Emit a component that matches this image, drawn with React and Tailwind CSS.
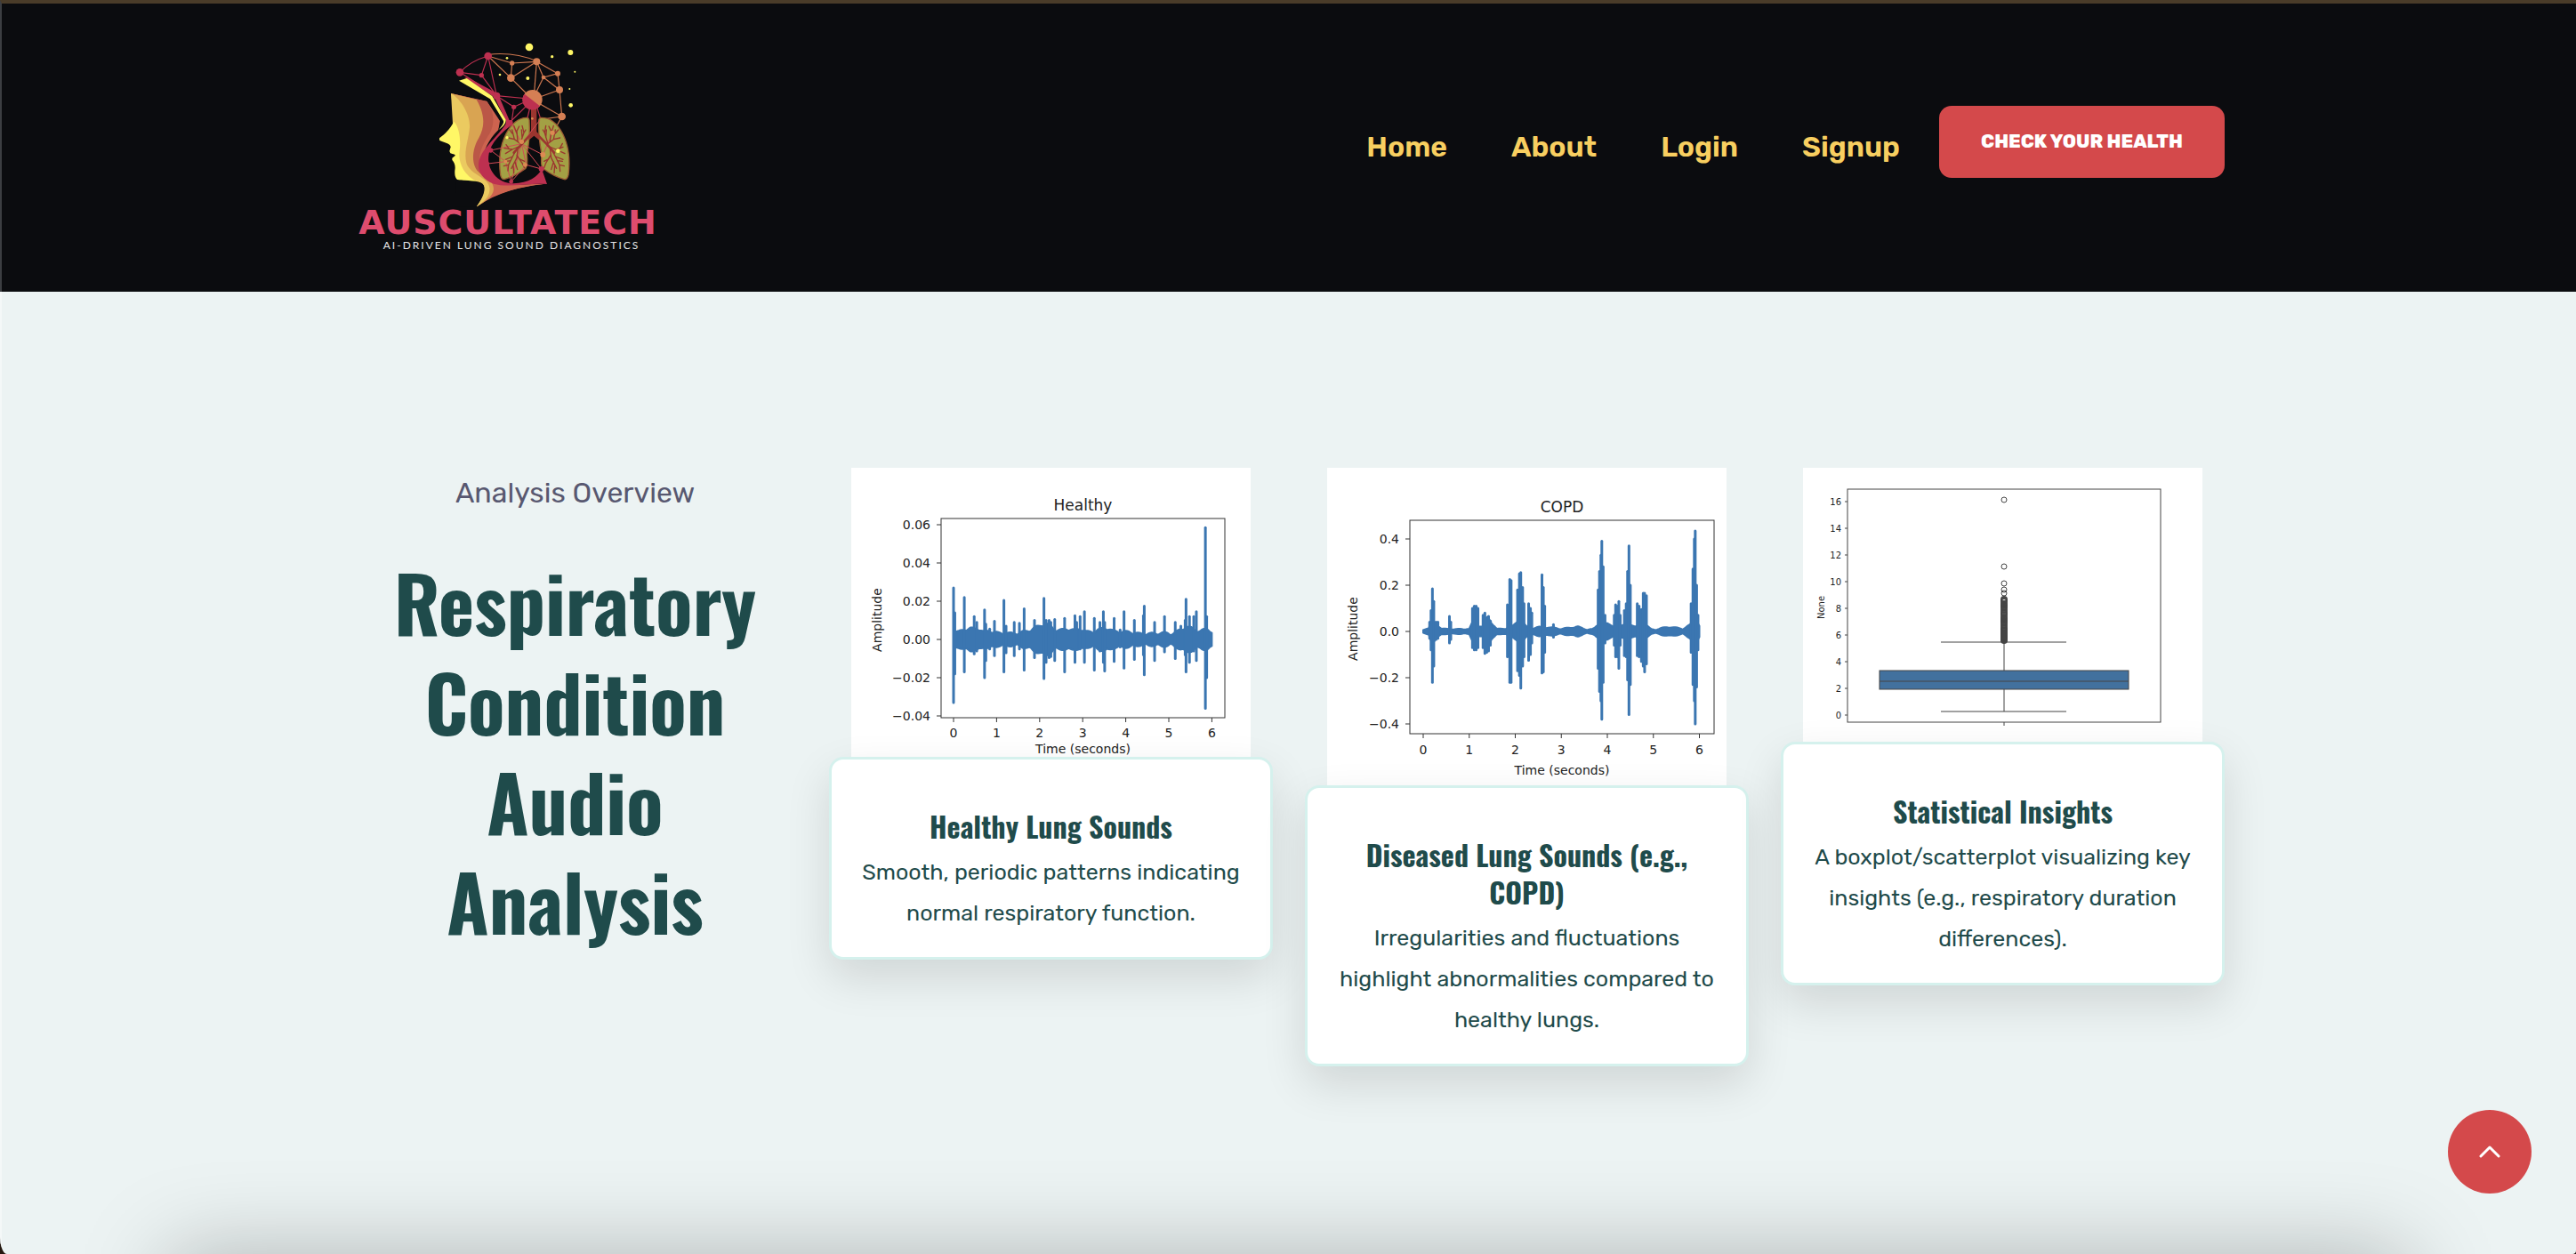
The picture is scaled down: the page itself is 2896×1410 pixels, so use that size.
import React from "react";

const SANS = "font-['Rubik','Inter',sans-serif]";
const HEADING = "font-['Oswald','Roboto_Condensed','Liberation_Sans',sans-serif]";

/* ---------- Logo ---------- */

const CRIMSON_LINKS = [
  [108, 124, 181, 134], [203, 69, 181, 134], [203, 69, 232, 203], [181, 134, 232, 203], [108, 124, 232, 203],
  [232, 203, 340, 213], [232, 203, 290, 241], [290, 241, 340, 218], [290, 241, 282, 294], [340, 230, 275, 294],
  [366, 235, 380, 280], [345, 240, 334, 285],
];
const ORANGE_LINKS = [
  [203, 69, 284, 93], [284, 93, 367, 88], [203, 69, 280, 143], [284, 93, 280, 143], [280, 143, 367, 88],
  [280, 143, 353, 216], [367, 88, 357, 216], [367, 88, 390, 141], [367, 88, 438, 128], [390, 141, 438, 128],
  [390, 141, 444, 183], [438, 128, 444, 183], [444, 183, 452, 273], [444, 183, 353, 216], [353, 216, 452, 273],
  [390, 141, 353, 216], [452, 273, 378, 283], [452, 273, 424, 325],
];
const ORANGE_NODES = [[284, 93, 8], [367, 88, 12], [280, 143, 13], [390, 141, 7], [438, 128, 9], [444, 183, 12], [452, 273, 13]];
const CRIMSON_NODES = [[108, 124, 13], [203, 69, 13], [181, 134, 8], [232, 203, 12], [290, 241, 8], [278, 294, 9], [212, 387, 8], [202, 432, 6], [281, 493, 7], [383, 450, 9]];
const SPARKS = [[342, 39, 13], [481, 57, 9], [419, 71, 5], [267, 76, 4], [243, 132, 4], [337, 144, 6], [496, 122, 3], [478, 180, 3], [482, 235, 7]];
const LOWER_LINKS = [
  [212, 387, 316, 365], [212, 387, 262, 425], [202, 432, 262, 425], [262, 425, 281, 493], [281, 493, 332, 436],
  [281, 493, 316, 365], [316, 365, 388, 402], [316, 365, 378, 285], [332, 436, 383, 450], [316, 365, 383, 450],
  [282, 294, 316, 365], [388, 402, 420, 328], [316, 365, 332, 436],
];
const BRONCHI = [
  "M316 367 L292 350 L284 318 M292 350 L272 345 M284 330 L276 318 M303 358 L300 322 L308 306 M301 332 L290 304 M312 362 L324 328 L330 318 M318 344 L316 318 M324 328 L318 304",
  "M312 372 L285 384 L258 380 M285 384 L262 398 M274 382 L264 368 M302 378 L286 408 L262 418 M286 408 L272 436 L256 440 M279 422 L266 424 M304 380 L300 412 L282 448 M294 426 L302 452 M300 404 L318 430 L326 446 M308 416 L326 424 M272 436 L270 456 M288 438 L290 464",
  "M402 367 L424 350 L430 318 M424 350 L446 345 M430 330 L440 318 M412 358 L416 322 L408 306 M415 332 L424 304 M404 362 L394 328 L388 318 M398 344 L400 318 M394 328 L398 304",
  "M404 372 L432 384 L456 376 M432 384 L462 398 M444 382 L454 364 M414 378 L430 408 L456 418 M430 408 L444 436 L460 440 M437 422 L454 424 M412 380 L416 412 L434 448 M424 426 L416 452 M414 404 L398 430 L392 446 M408 416 L392 424 M444 436 L446 458 M428 438 L426 464",
];

function LogoMark() {
  return (
    <svg viewBox="0 0 540 600" className="block h-[200px] w-[180px]" aria-hidden="true">
      <path fill="#cd634f" d="M78 195 L200 222 L247 288 L238 318 C204 350 180 400 184 440 C196 480 216 502 250 507 L395 500 C320 506 230 530 165 577 C180 540 190 515 172 490 Z" />
      <path fill="#bb5747" d="M78 195 L200 222 C224 255 226 295 210 328 C190 360 168 395 174 440 C182 480 202 500 218 520 C210 550 180 560 165 577 L150 440 Z" />
      <path fill="#cd634f" d="M180 470 C200 485 222 500 222 518 C220 545 190 560 165 577 C230 525 320 510 395 500 L300 503 C250 503 215 492 180 470 Z" />
      <path fill="#d9a452" d="M78 195 L164 216 C192 265 194 305 172 345 C154 375 146 415 160 445 C172 475 222 480 222 518 C220 545 190 560 165 577 L110 440 Z" />
      <path fill="#ebca60" d="M78 195 C112 215 144 268 141 310 C138 350 120 390 130 430 C142 470 208 480 208 515 C206 545 184 560 165 577 L90 400 Z" />
      <path fill="#fff766" d="M88 290 C106 310 112 350 107 390 C102 425 118 470 168 493 L192 499 C186 492 120 489 106 488 C92 486 90 470 91 455 C94 440 90 428 82 420 L82 413 L95 403 L76 397 L73 390 L77 376 C76 362 50 360 39 353 L39 346 C58 332 76 315 88 290 Z" />
      <path fill="#0b0c0f" d="M96 487 C130 490 172 489 187 500 C197 512 188 548 164 577 L90 577 Z" />
      <path fill="#ebca60" d="M160 489 C190 494 197 512 190 536 L165 577 C196 555 210 538 208 515 C204 500 186 490 160 489 Z" />

      <path fill="#bd3050" d="M124 142 L134 142 L236 196 L276 288 L284 300 C250 326 212 362 206 398 C196 450 234 498 288 499 C340 497 372 476 384 450 L402 501 C340 496 270 514 222 500 C188 488 168 462 171 432 C176 385 232 345 262 300 L264 288 L224 208 Z" />
      <path fill="#0b0c0f" d="M255 290 L222 225 L204 214 L200 222 L243 288 L238 318 Z" />
      <path fill="#fff766" d="M105 152 L131 144 L217 204 L263 284 C263 298 252 308 239 318 C250 304 257 296 255 288 L210 214 Z" />

      <g stroke="#bd3050" strokeWidth="3.5" fill="none">
        {CRIMSON_LINKS.map(([a, b, c, d], i) => <line key={i} x1={a} y1={b} x2={c} y2={d} />)}
        <path d="M108 124 Q145 85 203 69" />
      </g>
      <g stroke="#cf7850" strokeWidth="3.5" fill="none">
        {ORANGE_LINKS.map(([a, b, c, d], i) => <line key={i} x1={a} y1={b} x2={c} y2={d} />)}
        <path d="M203 64 Q290 54 367 86" />
      </g>

      <path fill="#9c352f" d="M348 245 H367 V325 L402 362 L396 370 L358 338 L318 372 L312 364 L348 326 Z" />
      <g fill="#a3a044" stroke="#9b5a33" strokeWidth="4">
        <path d="M335 277 C280 275 230 360 245 470 Q248 487 260 484 Q290 476 330 448 Q338 438 334 400 Q346 340 342 285 Q341 278 335 277 Z" />
        <path d="M381 277 C440 275 488 360 474 470 Q470 487 460 485 Q425 476 388 448 Q380 440 384 400 Q372 340 374 285 Q375 278 381 277 Z" />
      </g>
      <g stroke="#d44a55" strokeWidth="3">
        {LOWER_LINKS.map(([a, b, c, d], i) => <line key={i} x1={a} y1={b} x2={c} y2={d} />)}
      </g>
      <g stroke="#9c352f" strokeWidth="4" fill="none" strokeLinecap="round" strokeLinejoin="round">
        {BRONCHI.map((d) => <path key={d} d={d} />)}
        <path strokeWidth="8" d="M352 328 L316 367 L290 395 M364 328 L402 367 L426 395" />
      </g>
      <g fill="#dc8a52">
        <circle cx="316" cy="358" r="8" />
        <circle cx="262" cy="425" r="6" />
        <circle cx="328" cy="436" r="7" />
        <circle cx="388" cy="402" r="9" />
        <circle cx="420" cy="328" r="8" />
        <circle cx="352" cy="280" r="4" />
      </g>
      <circle cx="353" cy="216" r="33" fill="#d57f54" />
      <path fill="#bd3050" d="M326 197 A33 33 0 0 0 378 238 Z" />
      <g fill="#d57f54">{ORANGE_NODES.map(([x, y, r]) => <circle key={x} cx={x} cy={y} r={r} />)}</g>
      <g fill="#bd3050">{CRIMSON_NODES.map(([x, y, r]) => <circle key={x} cx={x} cy={y} r={r} />)}</g>
      <g fill="#fff766">
        {SPARKS.map(([x, y, r]) => <circle key={x} cx={x} cy={y} r={r} />)}
        <circle cx="267" cy="344" r="5" />
        <circle cx="439" cy="389" r="7" />
      </g>
    </svg>
  );
}

/* ---------- Charts ---------- */

// [time, half height of the solid band]; amplitudes are in units of 0.01
const HEALTHY_BASE = [
  [0, .4], [.1, .3], [.3, .45], [.4, .5], [.5, .45], [.6, .45], [.7, .3], [.85, .35], [.95, .3], [1.1, .2], [1.25, .25], [1.4, .2],
  [1.6, .3], [1.75, .35], [1.9, .55], [2, .6], [2.1, .7], [2.2, .7], [2.35, .4], [2.5, .4], [2.65, .45], [2.8, .4], [2.95, .45],
  [3.1, .3], [3.25, .3], [3.4, .45], [3.55, .5], [3.7, .35], [3.9, .3], [4.1, .3], [4.3, .2], [4.5, .2], [4.7, .22],
  [4.9, .25], [5.1, .2], [5.25, .4], [5.4, .55], [5.55, .5], [5.7, .3], [5.9, .5], [6, .25],
];
// [time, positive peak, negative peak]
const HEALTHY_PEAKS = [
  [0, 2.7, 3.3], [.03, 1.4, 1.8], [.25, 2.2, 1.7], [.48, 1.2, .75], [.54, .9, .6], [.72, 1.55, 2], [.75, .8, 1.1], [.84, .55, .5], [.95, .95, .85],
  [1.17, 2.05, 1.7], [1.22, .7, .7], [1.41, .9, .85], [1.53, .85, .5], [1.64, 1.6, 1.6], [1.88, 1, .95], [2.1, 2.15, 2.05], [2.15, 1, 1.2], [2.22, 1, .95],
  [2.26, .9, .9], [2.35, 1.05, 1.1], [2.58, 1.1, 1.7], [2.82, 1.25, 1.2], [2.86, .9, .5], [2.94, 1.2, .5], [3.04, 1.45, 1.2], [3.27, 1.1, 1.6], [3.4, .9, .6],
  [3.48, 1.45, 1.2], [3.51, .9, 1.65], [3.73, 1.1, 1.15], [3.87, .5, .4], [3.96, 1.45, 1.5], [4.2, 1, 1.05], [4.41, 1.25, .8], [4.43, 1.75, 1.85], [4.67, .9, 1.1],
  [4.9, 1.2, .65], [5.15, .9, 1], [5.28, .7, .5], [5.38, 1, .8], [5.4, 2.1, 1.7], [5.48, 1.2, 1.2], [5.58, 1.2, .6], [5.64, 1.45, 1.1], [5.85, 5.85, 3.6], [5.88, 1.2, 2],
];

// amplitudes are in units of 0.1
const COPD_BASE = [
  [0, .06], [.12, .08], [.2, .5], [.3, .25], [.4, .06], [.55, .08], [.7, .04], [.85, .08], [1, .06], [1.1, .5], [1.2, .2], [1.3, .15],
  [1.4, .6], [1.5, .3], [1.6, .06], [1.8, .1], [1.95, .2], [2.1, .5], [2.25, .15], [2.4, .1], [2.5, .15], [2.65, .15], [2.8, .12],
  [3, .08], [3.2, .12], [3.35, .18], [3.5, .06], [3.7, .06], [3.85, .35], [4, .3], [4.1, .2], [4.3, .2], [4.45, .3], [4.6, .15],
  [4.8, .3], [4.95, .06], [5.1, .06], [5.3, .16], [5.5, .12], [5.65, .08], [5.8, .25], [5.9, .6], [6, .2],
];
const COPD_PEAKS = [
  [.14, .4, .3], [.17, .9, .8], [.2, 1.85, 2.2], [.23, 1.3, 1.5], [.28, .4, .35], [.32, .4, .3], [.57, .65, .5], [.6, .4, .35],
  [1.07, 1, .7], [1.11, 1.1, .8], [1.15, 1.1, .8], [1.19, 1, .7], [1.3, .7, .7], [1.34, .8, .95], [1.38, .6, .9], [1.42, .65, .85], [1.46, .45, .6],
  [1.83, 1.15, 1.1], [1.88, 2.25, 2.2], [1.91, 2.2, 2.2], [2.05, 1.8, 1.7], [2.09, 2.5, 1.9], [2.12, 2.55, 2.45], [2.16, 1.9, 1.5], [2.19, 1.2, 1.1],
  [2.29, 1.2, 1.25], [2.33, 1, 1], [2.36, .8, .5], [2.58, 2.45, 1.8], [2.61, 1.9, 1.75], [2.64, 1.1, .9], [2.83, .3, .25],
  [3.8, 1.8, 1.6], [3.83, 2.6, 2.6], [3.86, 3.3, 3], [3.88, 3.9, 3.8], [3.91, 2.8, 2.2], [3.95, .7, .5], [4.15, .7, .6], [4.18, 1.15, 1.1], [4.22, 1.1, 1.1], [4.25, 1.3, 1.6], [4.28, .7, .6],
  [4.37, .9, 1.05], [4.41, 1.2, 1.1], [4.44, 2.6, 2.1], [4.47, 3.7, 3.6], [4.5, 2, 2.3], [4.65, 1.2, 1.05], [4.69, 1.1, 1.1], [4.74, .95, 1.3], [4.78, 1.65, 1.5], [4.81, 1.65, 1.75], [4.85, 1.55, 1.4],
  [5.82, 1.2, .9], [5.86, 2.7, 2.3], [5.89, 4, 3], [5.91, 4.35, 4], [5.94, 2, 2.4], [5.97, .7, .8],
];

// Linear interpolation over the band, with a small deterministic jitter for a noisy outline
function bandOutline(base, jitter) {
  const points = [];
  for (let i = 0; i <= 150; i += 1) {
    const t = i * 0.04;
    const k = Math.max(1, base.findIndex(([bt]) => bt >= t));
    const [t0, a0] = base[k - 1];
    const [t1, a1] = base[k];
    const a = a0 + ((a1 - a0) * (t - t0)) / (t1 - t0);
    points.push([t, a + jitter * Math.abs(Math.sin(i * 12.9898))]);
  }
  return points;
}

function Waveform({ title, height, frame, originX, unitX, originY, unitY, base, peaks, jitter, yTicks, titleY, xLabelY, timeY, amplitudeY }) {
  const [left, top, right, bottom] = frame;
  const middle = (left + right) / 2;
  const x = (t) => originX + t * unitX;
  const y = (v) => originY - v * unitY;
  const band = bandOutline(base, jitter);
  const body = [
    ...band.map(([t, a]) => `${x(t)},${y(a)}`),
    ...[...band].reverse().map(([t, a]) => `${x(t)},${y(-a)}`),
  ].join(" ");
  return (
    <svg viewBox={`0 0 449 ${height}`} className="block h-auto w-full bg-white font-['DejaVu_Sans',sans-serif]" role="img" aria-label={`${title} waveform`}>
      <g fill="#222">
        <text x={middle} y={titleY} fontSize="17" textAnchor="middle">{title}</text>
        <text x={middle} y={timeY} fontSize="14" textAnchor="middle">Time (seconds)</text>
        <text transform={`translate(34 ${amplitudeY}) rotate(-90)`} fontSize="14" textAnchor="middle">Amplitude</text>
        {yTicks.map(([v, label]) => (
          <text key={label} x={left - 12} y={y(v) + 5} fontSize="14" textAnchor="end">{label}</text>
        ))}
        {[0, 1, 2, 3, 4, 5, 6].map((t) => (
          <text key={t} x={x(t)} y={xLabelY} fontSize="14" textAnchor="middle">{t}</text>
        ))}
      </g>
      <g stroke="#3b76b1" fill="#3b76b1">
        <polygon points={body} strokeWidth="2" strokeLinejoin="round" />
        {peaks.map(([t, up, down]) => (
          <line key={t} x1={x(t)} x2={x(t)} y1={y(up)} y2={y(-down)} strokeWidth="3" strokeLinecap="round" />
        ))}
      </g>
      <g stroke="#333" fill="none" strokeWidth="1">
        <rect x={left} y={top} width={right - left} height={bottom - top} />
        {yTicks.map(([v, label]) => <line key={label} x1={left - 5} x2={left} y1={y(v)} y2={y(v)} />)}
        {[0, 1, 2, 3, 4, 5, 6].map((t) => <line key={t} x1={x(t)} x2={x(t)} y1={bottom} y2={bottom + 5} />)}
      </g>
    </svg>
  );
}

const OUTLIERS = [36, 111, 130, 137, 141, 148, 150, 153, 155, 157, 160, 163, 165, 168, 170, 172, 174, 177, 180, 182, 183, 185, 186, 188, 189, 190, 191, 192, 193, 194];

function BoxPlot() {
  return (
    <svg viewBox="0 0 449 308" className="block h-auto w-full bg-white font-['DejaVu_Sans',sans-serif]" role="img" aria-label="Boxplot of respiratory duration">
      <g fill="#222" fontSize="10">
        {[0, 2, 4, 6, 8, 10, 12, 14, 16].map((v) => (
          <text key={v} x="43" y={282 - v * 15} textAnchor="end">{v}</text>
        ))}
        <text transform="translate(24 157) rotate(-90)" textAnchor="middle">None</text>
      </g>
      <g stroke="#444" fill="none">
        {[0, 2, 4, 6, 8, 10, 12, 14, 16].map((v) => (
          <line key={v} x1="47" x2="50" y1={278 - v * 15} y2={278 - v * 15} />
        ))}
        <rect x="50" y="24" width="352" height="262" />
        <path d="M226 286 V290 M226 196 V228 M226 249 V274 M155 196 H296 M155 274 H296" />
        <rect x="86" y="228" width="280" height="21" fill="#42719e" />
        <path d="M86 240 H366" />
        {OUTLIERS.map((cy) => <circle key={cy} cx="226" cy={cy} r="3" strokeWidth={cy > 145 ? 2 : 1} />)}
      </g>
    </svg>
  );
}

/* ---------- Page ---------- */

const CARDS = [
  {
    title: "Healthy Lung Sounds",
    text: "Smooth, periodic patterns indicating normal respiratory function.",
    chart: (
      <Waveform title="Healthy" height={325} frame={[101, 57, 420, 281]} originX={115} unitX={48.4} originY={193} unitY={21.5}
        base={HEALTHY_BASE} peaks={HEALTHY_PEAKS} jitter={0.15} titleY={48} xLabelY={303} timeY={321} amplitudeY={171}
        yTicks={[[6, "0.06"], [4, "0.04"], [2, "0.02"], [0, "0.00"], [-2, "−0.02"], [-4, "−0.04"]]} />
    ),
  },
  {
    title: "Diseased Lung Sounds (e.g., COPD)",
    text: "Irregularities and fluctuations highlight abnormalities compared to healthy lungs.",
    chart: (
      <Waveform title="COPD" height={357} frame={[93, 59, 435, 299]} originX={108} unitX={51.75} originY={184} unitY={26}
        base={COPD_BASE} peaks={COPD_PEAKS} jitter={0.06} titleY={50} xLabelY={322} timeY={345} amplitudeY={181}
        yTicks={[[4, "0.4"], [2, "0.2"], [0, "0.0"], [-2, "−0.2"], [-4, "−0.4"]]} />
    ),
  },
  {
    title: "Statistical Insights",
    text: "A boxplot/scatterplot visualizing key insights (e.g., respiratory duration differences).",
    chart: <BoxPlot />,
  },
];

const NAV = ["Home", "About", "Login", "Signup"];

export default function App() {
  return (
    <div className="bg-[#24170f]">
      <div className={`flex min-h-screen flex-col overflow-hidden rounded-br-[4px] rounded-bl-[8px_20px] bg-[#ecf3f3] text-[#1f4b4b] ${SANS}`}>
        <header className="border-t-4 border-l-2 border-t-[#4a3c29] border-l-[#3c3e42] bg-[#0b0c0f]">
          <div className="mx-auto flex h-[324px] max-w-[2140px] items-start justify-between px-[18px]">
            <a href="#home" className="ml-1 mt-9 flex w-[340px] flex-col items-center">
              <LogoMark />
              <span className="-mt-2 font-['DejaVu_Sans',sans-serif] text-[38px] leading-[36px] font-bold tracking-wide whitespace-nowrap text-[#de4c6e]">AUSCULTATECH</span>
              <span className="pl-2 font-['Lato',sans-serif] text-[12px] leading-4 tracking-[2px] whitespace-nowrap text-[#e4e4e6]">AI-DRIVEN LUNG SOUND DIAGNOSTICS</span>
            </a>
            <nav className="mt-[115px] flex items-start">
              <ul className="mt-6 mr-11 flex gap-[72px] text-[32px] leading-[44px] font-semibold text-[#f8cf60]">
                {NAV.map((item) => (
                  <li key={item}><a href={`#${item.toLowerCase()}`}>{item}</a></li>
                ))}
              </ul>
              <button type="button" className="h-[81px] w-[321px] rounded-[14px] bg-[#d4494b] pb-0.5 text-[21px] font-extrabold whitespace-nowrap text-white">
                CHECK YOUR HEALTH
              </button>
            </nav>
          </div>
        </header>

        <main className="flex-1 border-l-2 border-[#f4f8f8]">
          <section className="mx-auto grid max-w-[2140px] grid-cols-4 items-start pt-[198px]">
            <div className="px-9 text-center">
              <p className="mt-1 text-[32px] leading-[48px] text-[#585870]">Analysis Overview</p>
              <h1 className={`mt-[42px] text-[86px] leading-[112px] font-bold ${HEADING}`}>Respiratory Condition Audio Analysis</h1>
            </div>
            {CARDS.map((card) => (
              <article key={card.title} className="px-[18px]">
                <div className="px-[25px]">{card.chart}</div>
                <div className="relative rounded-2xl border-3 border-[#d5f1ed] bg-white px-7 pt-[54px] pb-[26px] text-center shadow-[0_20px_50px_rgba(0,0,0,0.12)]">
                  <h2 className={`text-[32px] leading-[42px] font-bold ${HEADING}`}>{card.title}</h2>
                  <p className="mt-2 text-[25px] leading-[46px]">{card.text}</p>
                </div>
              </article>
            ))}
          </section>
        </main>

        <div className="mx-[190px] -mb-[200px] h-[200px] shadow-[0_0_100px_rgba(0,0,0,0.26)]" />

        <button type="button" aria-label="Back to top" className="fixed right-[50px] bottom-[68px] flex size-[94px] items-center justify-center rounded-full bg-[#d4494b] text-white">
          <svg viewBox="0 0 24 14" className="h-[14px] w-6" fill="none" stroke="currentColor" strokeWidth="3" strokeLinecap="round" strokeLinejoin="round" aria-hidden="true">
            <path d="M2 12 L12 2 L22 12" />
          </svg>
        </button>
      </div>
    </div>
  );
}
